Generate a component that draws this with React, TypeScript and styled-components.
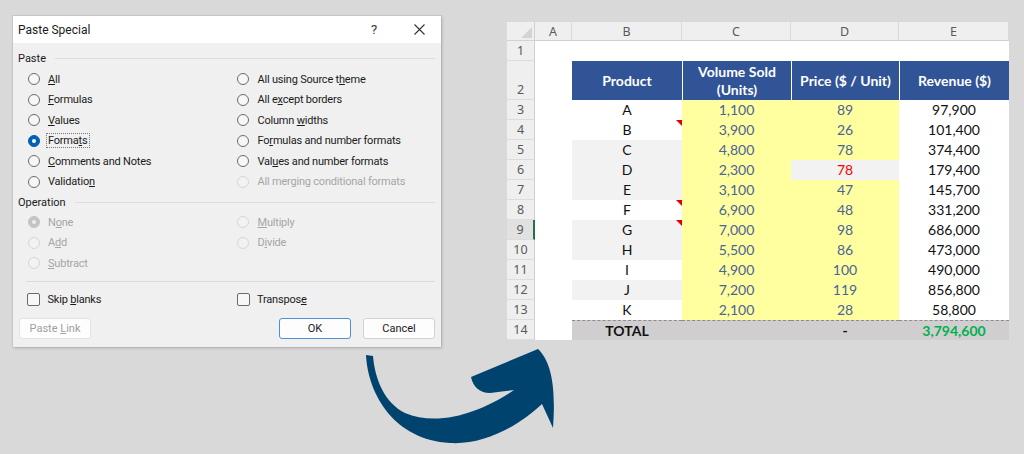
import React from 'react';
import styled, { createGlobalStyle } from 'styled-components';

const GlobalStyle = createGlobalStyle`
  html, body {
    margin: 0;
    padding: 0;
    background: #d9d9d9;
    width: 1024px;
    height: 454px;
    overflow: hidden;
  }
`;

const Page = styled.div`
  position: relative;
  width: 1024px;
  height: 454px;
  display: flex;
  align-items: flex-start;
  padding: 16px 0 0 13px;
  box-sizing: border-box;
`;

/* ---------- dialog ---------- */

const Dialog = styled.div`
  width: 428px;
  height: 331px;
  background: #f0f0f0;
  box-shadow: 0 0 0 1px rgba(0, 0, 0, 0.06), 1px 1px 3px rgba(0, 0, 0, 0.18);
  font-family: Roboto, 'Noto Sans', sans-serif;
  color: #1b1b1b;
  display: flex;
  flex-direction: column;
`;

const TitleBar = styled.div`
  height: 27px;
  background: #ffffff;
  display: flex;
  align-items: center;
  padding-left: 5px;
`;

const Title = styled.div`
  flex: 1;
  font-size: 12px;
`;

const HelpMark = styled.div`
  width: 14px;
  font-size: 13px;
  color: #333;
  text-align: center;
  margin-right: 30px;
`;

const CloseBox = styled.div`
  width: 16px;
  height: 16px;
  margin-right: 14px;
  display: flex;
  align-items: center;
  justify-content: center;
`;

const Body = styled.div`
  flex: 1;
  padding: 5px 6px 0 5px;
  display: flex;
  flex-direction: column;
`;

const GroupHeader = styled.div<{ $h: number }>`
  height: ${({ $h }) => $h}px;
  display: flex;
  align-items: center;
  font-size: 11px;
`;

const GroupLine = styled.div`
  flex: 1;
  height: 1px;
  background: #dcdcdc;
  margin-left: 9px;
`;

const OptionGrid = styled.div<{ $top?: number }>`
  display: grid;
  grid-template-columns: 209.5px 1fr;
  grid-auto-rows: 20.5px;
  padding-left: 9.5px;
  margin-top: ${({ $top }) => $top || 0}px;
`;

const Option = styled.div<{ $disabled?: boolean }>`
  display: flex;
  align-items: center;
  gap: 7.5px;
  font-size: 11px;
  letter-spacing: -0.2px;
  color: ${({ $disabled }) => ($disabled ? '#a6a6a6' : '#1b1b1b')};
  white-space: nowrap;
`;

const Radio = styled.span<{ $checked?: boolean; $disabled?: boolean }>`
  box-sizing: border-box;
  width: 12px;
  height: 12px;
  border-radius: 50%;
  flex: none;
  position: relative;
  border: 1px solid
    ${({ $checked, $disabled }) =>
      $checked ? ($disabled ? '#c4c4c4' : '#005fb8') : $disabled ? '#d6d6d6' : '#6b6b6b'};
  background: ${({ $checked, $disabled }) =>
    $checked ? ($disabled ? '#c4c4c4' : '#005fb8') : $disabled ? '#f2f2f2' : '#f7f7f7'};

  &::after {
    content: '';
    display: ${({ $checked }) => ($checked ? 'block' : 'none')};
    position: absolute;
    left: 50%;
    top: 50%;
    width: 4px;
    height: 4px;
    margin: -2px 0 0 -2px;
    border-radius: 50%;
    background: ${({ $disabled }) => ($disabled ? '#ededed' : '#ffffff')};
  }
`;

const FocusLabel = styled.span<{ $focus?: boolean }>`
  padding: 0 1px;
  margin-left: -1px;
  border: 1px dotted ${({ $focus }) => ($focus ? '#7a7a7a' : 'transparent')};
  line-height: 13px;
`;

const Separator = styled.div`
  height: 1px;
  background: #dcdcdc;
  margin: 7.5px 0 7px 8px;
`;

const CheckRow = styled.div`
  display: grid;
  grid-template-columns: 209.5px 1fr;
  height: 20px;
  padding-left: 9px;
`;

const CheckBox = styled.span`
  box-sizing: border-box;
  width: 13px;
  height: 13px;
  border: 1px solid #6b6b6b;
  border-radius: 2px;
  background: #f7f7f7;
  flex: none;
`;

const ButtonRow = styled.div`
  margin-top: 9px;
  display: flex;
  gap: 12px;
  padding-left: 1px;
`;

const Button = styled.div<{ $variant?: 'default' | 'primary' | 'disabled' }>`
  box-sizing: border-box;
  width: 72px;
  height: 21px;
  border-radius: 3px;
  background: #fdfdfd;
  border: 1px solid
    ${({ $variant }) =>
      $variant === 'primary' ? '#4f8fd6' : $variant === 'disabled' ? '#e3e3e3' : '#d2d2d2'};
  color: ${({ $variant }) => ($variant === 'disabled' ? '#a0a0a0' : '#1b1b1b')};
  font-size: 11px;
  display: flex;
  align-items: center;
  justify-content: center;
  white-space: pre;
`;

const Spacer = styled.div`
  flex: 1;
`;

/* ---------- sheet ---------- */

const Sheet = styled.div`
  margin: 6px 0 0 66px;
  display: grid;
  grid-template-columns: 28px 37px 110px 109px 108px 110px;
  grid-template-rows: 19px 20px 39px repeat(12, 20px);
  background: #ffffff;
  font-family: 'Lato', 'Open Sans', sans-serif;
  font-size: 14px;
`;

const Corner = styled.div`
  background: #efefef;
  border-right: 1px solid #d2d2d2;
  border-bottom: 1px solid #d2d2d2;
  position: relative;

  &::after {
    content: '';
    position: absolute;
    right: 2px;
    bottom: 2px;
    border-style: solid;
    border-width: 0 0 11px 11px;
    border-color: transparent transparent #d4d4d4 transparent;
  }
`;

const ColHead = styled.div`
  background: #efefef;
  border-right: 1px solid #dadada;
  border-bottom: 1px solid #cfcfcf;
  display: flex;
  align-items: center;
  justify-content: center;
  font-family: 'Noto Sans', sans-serif;
  font-size: 12.5px;
  color: #5a5a5a;
`;

const RowHead = styled.div<{ $active?: boolean }>`
  background: ${({ $active }) => ($active ? '#e1e1e1' : '#efefef')};
  border-bottom: 1px solid #dcdcdc;
  border-right: ${({ $active }) => ($active ? '2px solid #217346' : '1px solid #cfcfcf')};
  display: flex;
  align-items: flex-end;
  justify-content: center;
  padding-bottom: 1px;
  box-sizing: border-box;
  font-family: 'Noto Sans', sans-serif;
  font-size: 12.5px;
  color: #5a5a5a;
`;

const Cell = styled.div<{ $bg?: string; $color?: string; $bold?: boolean; $dashed?: boolean }>`
  position: relative;
  background: ${({ $bg }) => $bg || '#ffffff'};
  color: ${({ $color }) => $color || '#111111'};
  font-weight: ${({ $bold }) => ($bold ? 700 : 400)};
  border-top: ${({ $dashed }) => ($dashed ? '1px dashed #8c8c8c' : 'none')};
  box-sizing: border-box;
  display: flex;
  align-items: center;
  justify-content: center;
  line-height: 1;
`;

const HeadCell = styled.div<{ $first?: boolean }>`
  background: #305496;
  color: #ffffff;
  font-weight: 700;
  border-left: ${({ $first }) => ($first ? 'none' : '1px solid #ffffff')};
  display: flex;
  align-items: center;
  justify-content: center;
  text-align: center;
  line-height: 18px;
`;

const CommentMark = styled.span`
  position: absolute;
  top: 0;
  right: 0;
  border-style: solid;
  border-width: 0 6px 6px 0;
  border-color: transparent #e00000 transparent transparent;
`;

const ArrowLayer = styled.svg`
  position: absolute;
  left: 0;
  top: 0;
  pointer-events: none;
`;

/* ---------- data ---------- */

const renderKey = (label: string) => {
  const i = label.indexOf('&');
  if (i < 0) return <span>{label}</span>;
  return (
    <span>
      {label.slice(0, i)}
      <u>{label[i + 1]}</u>
      {label.slice(i + 2)}
    </span>
  );
};

type Opt = { label: string; checked?: boolean; disabled?: boolean; focus?: boolean };

const pasteRows: [Opt, Opt][] = [
  [{ label: '&All' }, { label: 'All using Source t&heme' }],
  [{ label: '&Formulas' }, { label: 'All e&xcept borders' }],
  [{ label: '&Values' }, { label: 'Column &widths' }],
  [{ label: 'Forma&ts', checked: true, focus: true }, { label: 'Fo&rmulas and number formats' }],
  [{ label: '&Comments and Notes' }, { label: 'Val&ues and number formats' }],
  [{ label: 'Validatio&n' }, { label: 'All merging conditional formats', disabled: true }],
];

const operationRows: [Opt, Opt | null][] = [
  [{ label: 'N&one', checked: true, disabled: true }, { label: '&Multiply', disabled: true }],
  [{ label: 'A&dd', disabled: true }, { label: 'D&ivide', disabled: true }],
  [{ label: '&Subtract', disabled: true }, null],
];

type Row = {
  product: string;
  volume: string;
  price: string;
  revenue: string;
  shade?: boolean;
  comment?: boolean;
  priceAlert?: boolean;
};

const rows: Row[] = [
  { product: 'A', volume: '1,100', price: '89', revenue: '97,900' },
  { product: 'B', volume: '3,900', price: '26', revenue: '101,400', comment: true },
  { product: 'C', volume: '4,800', price: '78', revenue: '374,400', shade: true },
  { product: 'D', volume: '2,300', price: '78', revenue: '179,400', shade: true, priceAlert: true },
  { product: 'E', volume: '3,100', price: '47', revenue: '145,700', shade: true },
  { product: 'F', volume: '6,900', price: '48', revenue: '331,200', comment: true },
  { product: 'G', volume: '7,000', price: '98', revenue: '686,000', shade: true, comment: true },
  { product: 'H', volume: '5,500', price: '86', revenue: '473,000', shade: true },
  { product: 'I', volume: '4,900', price: '100', revenue: '490,000' },
  { product: 'J', volume: '7,200', price: '119', revenue: '856,800', shade: true },
  { product: 'K', volume: '2,100', price: '28', revenue: '58,800' },
];

const YELLOW = '#ffff9f';
const GREY = '#f2f2f2';
const SLATE = '#4a6398';

const OptionItem = ({ opt }: { opt: Opt | null }) =>
  opt ? (
    <Option $disabled={opt.disabled}>
      <Radio $checked={opt.checked} $disabled={opt.disabled} />
      <FocusLabel $focus={opt.focus}>{renderKey(opt.label)}</FocusLabel>
    </Option>
  ) : (
    <div />
  );

export default function App() {
  return (
    <>
      <GlobalStyle />
      <Page>
        <Dialog>
          <TitleBar>
            <Title>Paste Special</Title>
            <HelpMark>?</HelpMark>
            <CloseBox>
              <svg width="11" height="11" viewBox="0 0 11 11">
                <path d="M0.5 0.5 L10.5 10.5 M10.5 0.5 L0.5 10.5" stroke="#333" strokeWidth="1.1" />
              </svg>
            </CloseBox>
          </TitleBar>
          <Body>
            <GroupHeader $h={20}>
              Paste
              <GroupLine />
            </GroupHeader>
            <OptionGrid $top={1}>
              {pasteRows.map(([l, r]) => (
                <React.Fragment key={l.label}>
                  <OptionItem opt={l} />
                  <OptionItem opt={r} />
                </React.Fragment>
              ))}
            </OptionGrid>
            <GroupHeader $h={20}>
              Operation
              <GroupLine />
            </GroupHeader>
            <OptionGrid>
              {operationRows.map(([l, r]) => (
                <React.Fragment key={l.label}>
                  <OptionItem opt={l} />
                  <OptionItem opt={r} />
                </React.Fragment>
              ))}
            </OptionGrid>
            <Separator />
            <CheckRow>
              <Option>
                <CheckBox />
                {renderKey('Skip &blanks')}
              </Option>
              <Option>
                <CheckBox />
                {renderKey('Transpos&e')}
              </Option>
            </CheckRow>
            <ButtonRow>
              <Button $variant="disabled">{renderKey('Paste &Link')}</Button>
              <Spacer />
              <Button $variant="primary">OK</Button>
              <Button>Cancel</Button>
            </ButtonRow>
          </Body>
        </Dialog>

        <Sheet>
          <Corner />
          {['A', 'B', 'C', 'D', 'E'].map((c) => (
            <ColHead key={c}>{c}</ColHead>
          ))}

          <RowHead>1</RowHead>
          <Cell />
          <Cell />
          <Cell />
          <Cell />
          <Cell />

          <RowHead>2</RowHead>
          <Cell />
          <HeadCell $first>Product</HeadCell>
          <HeadCell>
            Volume Sold
            <br />
            (Units)
          </HeadCell>
          <HeadCell>Price ($ / Unit)</HeadCell>
          <HeadCell>Revenue ($)</HeadCell>

          {rows.map((r, i) => (
            <React.Fragment key={r.product}>
              <RowHead $active={i + 3 === 9}>{i + 3}</RowHead>
              <Cell />
              <Cell $bg={r.shade ? GREY : undefined}>
                {r.product}
                {r.comment && <CommentMark />}
              </Cell>
              <Cell $bg={YELLOW} $color={SLATE}>
                {r.volume}
              </Cell>
              <Cell $bg={r.priceAlert ? GREY : YELLOW} $color={r.priceAlert ? '#ff0000' : SLATE}>
                {r.price}
              </Cell>
              <Cell>{r.revenue}</Cell>
            </React.Fragment>
          ))}

          <RowHead>14</RowHead>
          <Cell />
          <Cell $bg="#d0cece" $bold $dashed>
            TOTAL
          </Cell>
          <Cell $bg="#d0cece" $dashed />
          <Cell $bg="#d0cece" $bold $dashed>
            -
          </Cell>
          <Cell $bg="#d0cece" $bold $dashed $color="#00b050">
            3,794,600
          </Cell>
        </Sheet>

        <ArrowLayer width="1024" height="454" viewBox="0 0 1024 454">
          <path
            d="M366 355
               C368 395, 395 440, 450 443
               C485 445, 520 425, 542 404
               L553 428
               C555 400, 555 365, 538 349
               L471 377
               C473 387, 480 393, 490 393
               L514 390
               C485 410, 440 428, 405 413
               C385 403, 375 380, 373 356
               Z"
            fill="#01436f"
          />
        </ArrowLayer>
      </Page>
    </>
  );
}
